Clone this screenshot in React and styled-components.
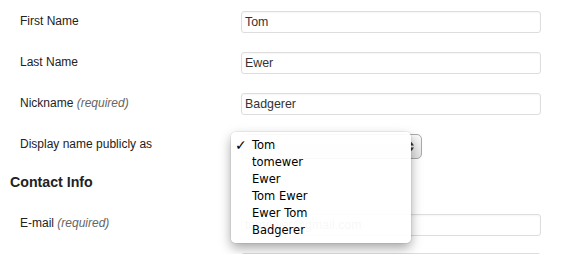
import React from "react";
import styled, { createGlobalStyle } from "styled-components";

const Global = createGlobalStyle`
  html, body { margin: 0; padding: 0; background: #fff; }
  body { font-family: "Liberation Sans", Arial, sans-serif; color: #222; overflow: hidden; }
`;

const Page = styled.div`
  width: 582px;
  height: 254px;
  padding: 11px 0 0 10px;
  box-sizing: border-box;
  overflow: hidden;
`;

const Row = styled.div`
  display: grid;
  grid-template-columns: 231px 300px;
  align-items: start;
  margin-bottom: ${(p) => p.$gap ?? 19}px;
`;

const Label = styled.div`
  padding: ${(p) => p.$top ?? 2.8}px 0 0 10px;
  font-size: 12px;
  line-height: 15px;
  color: #222;
  em { color: #666; font-style: italic; }
`;

const Input = styled.div`
  box-sizing: border-box;
  height: 22px;
  width: 300px;
  border: 1px solid #dddddd;
  border-radius: 3px;
  padding: 0 3px;
  display: flex;
  align-items: center;
  font-size: 12.4px;
  color: #333;
  background: #fff;
  box-shadow: inset 0 1px 2px rgba(0, 0, 0, 0.04);
`;

const SelectWrap = styled.div`
  position: relative;
  width: 181px;
  height: 25px;
`;

const SelectBox = styled.div`
  box-sizing: border-box;
  width: 181px;
  height: 25px;
  border: 1px solid #a9a9a9;
  border-radius: 5px;
  background: linear-gradient(#fafafa, #e2e2e2);
  display: flex;
  justify-content: flex-end;
  align-items: center;
  padding-right: 6px;
`;

const Arrows = styled.svg`
  width: 7px;
  height: 11px;
`;

const Menu = styled.ul`
  position: absolute;
  left: -10px;
  top: -2px;
  width: 180px;
  margin: 0;
  padding: 5px 0 4px;
  list-style: none;
  box-sizing: border-box;
  background: rgba(255, 255, 255, 0.94);
  border-radius: 5px;
  box-shadow: 0 0 0 1px rgba(0, 0, 0, 0.05), 0 5px 12px rgba(0, 0, 0, 0.35);
  font-family: "DejaVu Sans", Verdana, sans-serif;
  font-size: 11.5px;
  color: #000;
  z-index: 5;
`;

const Item = styled.li`
  position: relative;
  height: 17px;
  line-height: 17px;
  padding-left: 21px;
`;

const Check = styled.span`
  position: absolute;
  left: 4px;
  top: 0;
  font-size: 14px;
  font-weight: bold;
`;

const Heading = styled.h3`
  margin: 14px 0 23px;
  font-size: 14.2px;
  line-height: 18px;
  font-weight: bold;
  color: #222;
`;

const Faint = styled.span`
  color: #777;
`;

const options = ["Tom", "tomewer", "Ewer", "Tom Ewer", "Ewer Tom", "Badgerer"];

export default function App() {
  return (
    <>
      <Global />
      <Page>
        <Row>
          <Label>First Name</Label>
          <Input>Tom</Input>
        </Row>
        <Row>
          <Label>Last Name</Label>
          <Input>Ewer</Input>
        </Row>
        <Row>
          <Label>
            Nickname <em>(required)</em>
          </Label>
          <Input>Badgerer</Input>
        </Row>
        <Row $gap={0}>
          <Label>Display name publicly as</Label>
          <SelectWrap>
            <SelectBox>
              <Arrows viewBox="0 0 7 11">
                <path d="M3.5 1 L6 4.5 H1 Z M3.5 10 L6 6.5 H1 Z" fill="#333" />
              </Arrows>
            </SelectBox>
            <Menu>
              {options.map((o, i) => (
                <Item key={o}>
                  {i === 0 && <Check>✓</Check>}
                  {o}
                </Item>
              ))}
            </Menu>
          </SelectWrap>
        </Row>
        <Heading>Contact Info</Heading>
        <Row $gap={17}>
          <Label $top={2.2}>
            E-mail <em>(required)</em>
          </Label>
          <Input>
            <Faint>tomewer@gmail.com</Faint>
          </Input>
        </Row>
        <Row>
          <Label />
          <Input />
        </Row>
      </Page>
    </>
  );
}
